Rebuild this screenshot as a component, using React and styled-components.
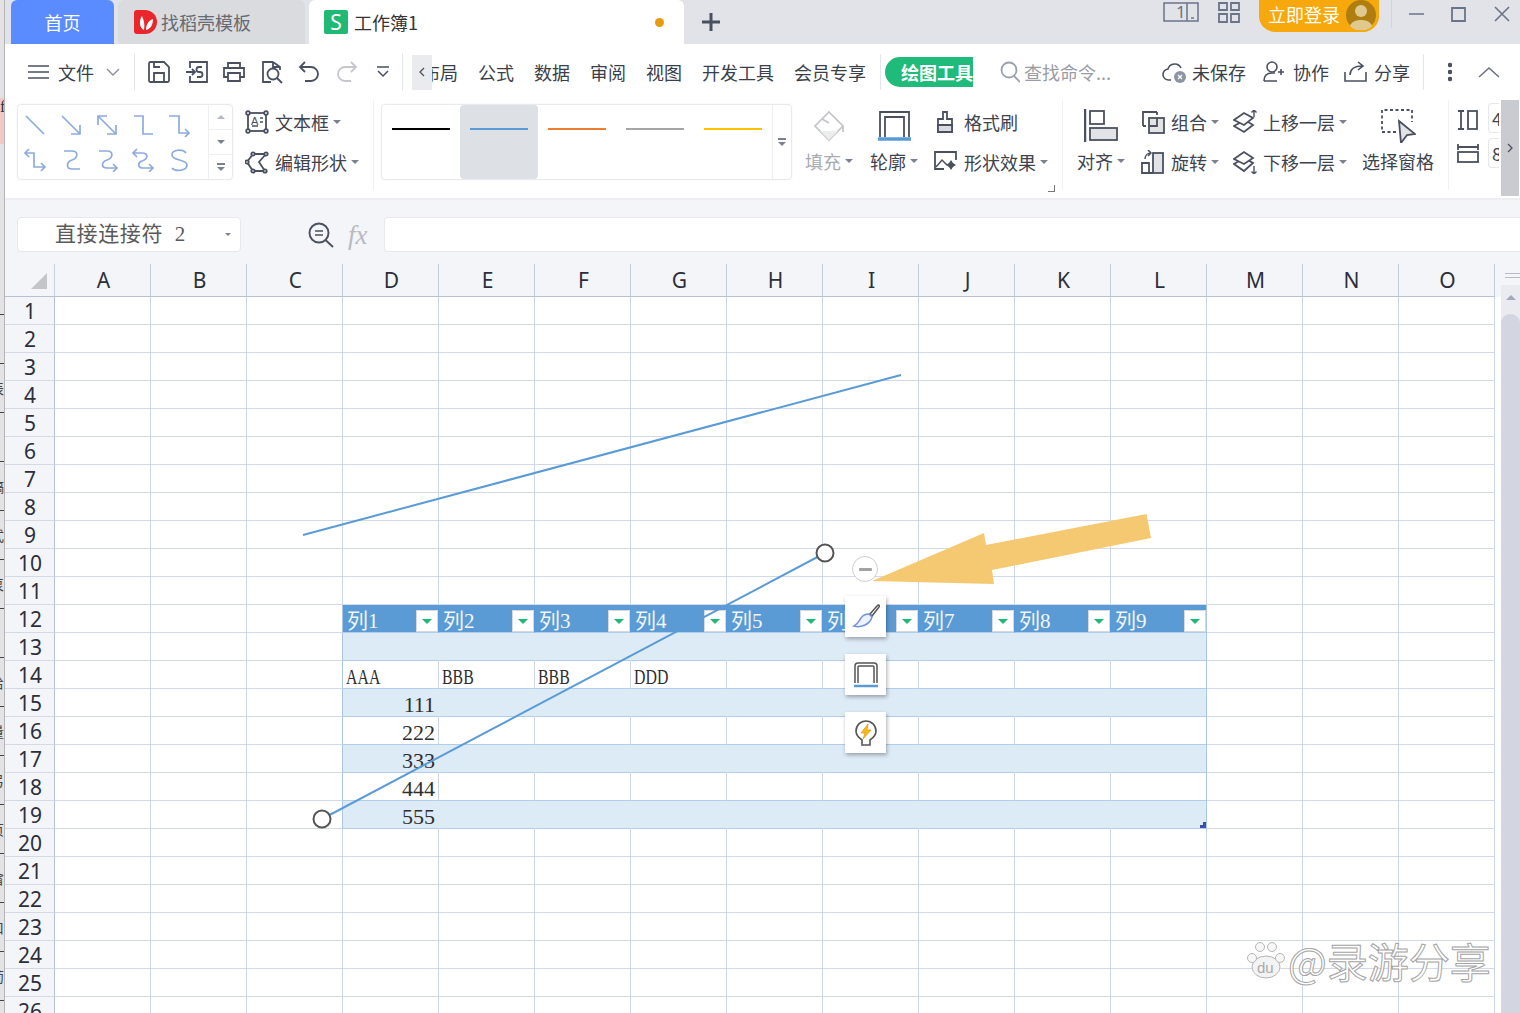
import React from "react";
import styled, { createGlobalStyle } from "styled-components";

const SANS = `"Noto Sans CJK SC", "Noto Sans", sans-serif`;
const SERIF = `"Liberation Serif", "Noto Sans CJK SC", serif`;
const INK = "#4a5060";

const GlobalStyle = createGlobalStyle`
  html, body { margin: 0; padding: 0; background: #fff; }
  body { font-family: ${SANS}; color: #333; }
  * { box-sizing: border-box; }
`;

const Page = styled.div`
  position: relative;
  display: flex;
  width: 1520px;
  height: 1013px;
  overflow: hidden;
`;
const Strip = styled.div`
  width: 5px;
  flex: none;
  display: flex;
  flex-direction: column;
  background: #e3e3e5;
  border-right: 1px solid #b4b4b6;
`;
const StripTop = styled.div`
  height: ${(p) => p.$h}px;
  flex: none;
  background: ${(p) => p.$bg || "transparent"};
  overflow: hidden;
  font: 16px ${SERIF};
  color: #333;
`;
const StripRow = styled.div`
  height: 49px;
  flex: none;
  overflow: hidden;
  border-bottom: 1px solid #444;
  font-size: 14px;
  line-height: 48px;
  color: #444;
  text-indent: -10px;
`;
const Main = styled.div`
  flex: 1;
  min-width: 0;
  display: flex;
  flex-direction: column;
`;

const Glyph = styled.svg`
  flex: none;
  display: block;
  margin-left: ${(p) => p.$ml || 0}px;
  fill: none;
  stroke: ${(p) => p.$color || INK};
  stroke-width: ${(p) => p.$sw || 1.8};
`;
const Icon = ({ w = 24, h = 24, children, ...rest }) => (
  <Glyph width={w} height={h} viewBox={`0 0 ${w} ${h}`} {...rest}>
    {children}
  </Glyph>
);

/* title bar */
const TitleBar = styled.div`
  height: 44px;
  flex: none;
  display: flex;
  align-items: center;
  padding-left: 6px;
  background: #e1e3e8;
`;
const Tab = styled.div`
  height: 44px;
  width: ${(p) => p.$w}px;
  margin-right: 4px;
  flex: none;
  display: flex;
  align-items: center;
  justify-content: ${(p) => (p.$center ? "center" : "flex-start")};
  padding-left: ${(p) => p.$pl || 0}px;
  padding-right: ${(p) => p.$pr || 0}px;
  border-radius: 6px 6px 0 0;
  background: ${(p) => p.$bg};
  color: ${(p) => p.$fg};
  font-size: 18px;
`;
const TabLabel = styled.span`
  margin-left: ${(p) => p.$ml || 5}px;
`;
const SheetLogo = styled.div`
  width: 24px;
  height: 24px;
  flex: none;
  background: #1fb974;
  border-radius: 2px;
  color: #fff;
  font: 400 21px/24px "Noto Sans", sans-serif;
  text-align: center;
`;
const Dot = styled.span`
  width: 9px;
  height: 9px;
  border-radius: 50%;
  background: #e99a0a;
  margin-left: auto;
`;
const WindowTools = styled.div`
  margin-left: auto;
  height: 44px;
  display: flex;
  align-items: flex-start;
  padding-right: 10px;
`;
const LoginPill = styled.div`
  width: 120px;
  height: 32px;
  margin-left: 19px;
  display: flex;
  align-items: center;
  padding: 0 0 4px 9px;
  border-radius: 0 0 16px 16px;
  background: #f6a80c;
  color: #fff;
  font-size: 18px;
`;
const Avatar = styled.svg`
  width: 30px;
  height: 30px;
  margin: 2px 0 0 6px;
  flex: none;
`;
const BarLine = styled.div`
  width: 1px;
  height: 28px;
  margin-left: 12px;
  background: #d2d4d9;
`;

/* menu bar */
const MenuBar = styled.div`
  height: 56px;
  flex: none;
  display: flex;
  align-items: center;
  padding-left: 23px;
  background: #fff;
  font-size: 18px;
  color: #3a3f4a;
`;
const MenuText = styled.span`
  flex: none;
  margin-left: ${(p) => p.$ml || 0}px;
  color: ${(p) => p.$color || "inherit"};
  white-space: nowrap;
`;
const MenuLine = styled.div`
  width: 1px;
  height: 36px;
  flex: none;
  margin-left: ${(p) => p.$ml}px;
  background: #e3e5e9;
`;
const TabScroll = styled.div`
  width: 20px;
  height: 35px;
  flex: none;
  margin-left: 9px;
  display: flex;
  align-items: center;
  justify-content: center;
  background: #e9ebef;
`;
const ClippedTab = styled.div`
  width: 26px;
  flex: none;
  display: flex;
  justify-content: flex-end;
  overflow: hidden;
  white-space: nowrap;
`;
const ToolPill = styled.div`
  width: 88px;
  height: 30px;
  flex: none;
  margin-left: 4px;
  padding-left: 16px;
  overflow: hidden;
  border-radius: 15px 0 0 15px;
  background: #20ba7b;
  color: #fff;
  font-weight: 700;
  line-height: 30px;
  white-space: nowrap;
`;

/* ribbon */
const Ribbon = styled.div`
  position: relative;
  height: 100px;
  flex: none;
  display: flex;
  align-items: flex-start;
  padding-left: 12px;
  overflow: hidden;
  background: #fff;
  border-bottom: 2px solid #eceef1;
  font-size: 18px;
  color: #3e434e;
`;
const ShapeGallery = styled.div`
  width: 216px;
  height: 76px;
  margin-top: 4px;
  flex: none;
  display: flex;
  border: 1px solid #e9eaec;
  border-radius: 4px;
  box-shadow: 0 0 2px #eee;
`;
const ShapeGrid = styled.div`
  flex: 1;
  display: grid;
  grid-template-columns: repeat(5, 36px);
  grid-auto-rows: 35px;
  align-content: center;
  justify-items: center;
  align-items: center;
  margin-left: -1px;
`;
const GalleryScroll = styled.div`
  width: 24px;
  flex: none;
  display: flex;
  flex-direction: column;
  border-left: 1px solid #eeeff1;
`;
const ScrollStep = styled.div`
  flex: 1;
  display: flex;
  align-items: center;
  justify-content: center;
  & + & {
    border-top: 1px solid #eeeff1;
  }
`;
const Tri = styled.span`
  display: block;
  flex: none;
  width: 0;
  height: 0;
  margin-left: ${(p) => p.$ml || 0}px;
  border-left: ${(p) => p.$s || 4}px solid transparent;
  border-right: ${(p) => p.$s || 4}px solid transparent;
  border-top: ${(p) => (p.$up ? "0" : `${p.$s || 4}px solid ${p.$color || "#7b8190"}`)};
  border-bottom: ${(p) => (p.$up ? `${p.$s || 4}px solid ${p.$color || "#b4b8c2"}` : "0")};
`;
const Stack = styled.div`
  width: ${(p) => p.$w}px;
  margin-left: ${(p) => p.$ml}px;
  margin-top: 10px;
  flex: none;
  display: flex;
  flex-direction: column;
  gap: ${(p) => p.$gap ?? 16}px;
`;
const ToolRow = styled.div`
  height: 24px;
  display: flex;
  align-items: center;
  white-space: nowrap;
`;
const ToolText = styled.span`
  margin-left: 6px;
  color: ${(p) => p.$color || "inherit"};
`;
const RibbonLine = styled.div`
  width: 1px;
  height: 90px;
  flex: none;
  margin-left: ${(p) => p.$ml}px;
  background: #f0f1f3;
`;
const LineGallery = styled.div`
  width: 411px;
  height: 76px;
  margin-top: 4px;
  margin-left: 7px;
  flex: none;
  display: flex;
  border: 1px solid #e9eaec;
  border-radius: 4px;
  box-shadow: 0 0 2px #eee;
`;
const LineCell = styled.div`
  width: 78px;
  flex: none;
  padding: 23px 10px 0;
  border-radius: 4px;
  background: ${(p) => (p.$on ? "#dde1e6" : "transparent")};
`;
const LineSample = styled.div`
  height: 2px;
  background: ${(p) => p.$color};
`;
const LineScroll = styled.div`
  margin-left: auto;
  width: 19px;
  display: flex;
  flex-direction: column;
  align-items: center;
  justify-content: center;
  gap: 2px;
  border-left: 1px solid #eeeff1;
`;
const MoreIcon = styled.div`
  display: flex;
  flex-direction: column;
  align-items: center;
  gap: 2px;
`;
const MoreBar = styled.span`
  width: 8px;
  height: 1.5px;
  background: #7b8190;
`;
const BigTool = styled.div`
  width: ${(p) => p.$w}px;
  margin-left: ${(p) => p.$ml}px;
  padding-top: 8px;
  flex: none;
  display: flex;
  flex-direction: column;
  align-items: center;
`;
const BigIconBox = styled.div`
  height: 35px;
  display: flex;
  align-items: center;
  margin-bottom: 6px;
`;
const BigLabel = styled.div`
  display: flex;
  align-items: center;
  line-height: 24px;
  white-space: nowrap;
  color: ${(p) => p.$color || "inherit"};
`;
const CornerMark = styled.span`
  position: absolute;
  left: 1043px;
  top: 85px;
  width: 7px;
  height: 7px;
  border-right: 1px solid #777;
  border-bottom: 1px solid #777;
`;
const SizeStack = styled.div`
  margin-left: 8px;
  margin-top: 10px;
  display: flex;
  flex-direction: column;
  gap: 13px;
  flex: none;
`;
const SizeInputs = styled.div`
  margin-left: 9px;
  margin-top: 3px;
  flex: none;
  display: flex;
  flex-direction: column;
  gap: 5px;
`;
const SizeInput = styled.div`
  width: 11px;
  height: 30px;
  overflow: hidden;
  border: 1px solid #e6e7e9;
  border-right: 0;
  border-radius: 4px 0 0 4px;
  padding-left: 3px;
  font-size: 18px;
  line-height: 28px;
`;
const RibbonEnd = styled.div`
  width: 18px;
  height: 96px;
  margin-left: 2px;
  flex: none;
  display: flex;
  align-items: center;
  justify-content: center;
  background: #c9cbd0;
`;

/* formula bar */
const FormulaBar = styled.div`
  height: 64px;
  flex: none;
  display: flex;
  align-items: center;
  padding: 17px 0 12px 12px;
  background: #f3f5f8;
`;
const NameBox = styled.div`
  width: 224px;
  height: 35px;
  flex: none;
  display: flex;
  align-items: center;
  padding: 0 9px 0 37px;
  background: #fff;
  border: 1px solid #e6e8ec;
  border-radius: 4px;
  font: 21px/33px ${SERIF};
  color: #5a5a5a;
  letter-spacing: 0.6px;
  word-spacing: 6px;
`;
const NameCaret = styled.span`
  margin-left: auto;
`;
const FxMark = styled.span`
  margin-left: 14px;
  width: 25px;
  font: italic 27px/34px ${SERIF};
  color: #b9bbc0;
`;
const FormulaInput = styled.div`
  flex: 1;
  height: 35px;
  margin-left: 11px;
  background: #fff;
  border: 1px solid #e6e8ec;
  border-right: 0;
  border-radius: 4px 0 0 4px;
`;

/* sheet */
const Sheet = styled.div`
  flex: 1;
  min-height: 0;
  display: flex;
  overflow: hidden;
`;
const SheetGrid = styled.div`
  width: 1490px;
  flex: none;
`;
const SheetRow = styled.div`
  display: flex;
  height: ${(p) => (p.$head ? 33 : 28)}px;
`;
const CornerHead = styled.div`
  width: 50px;
  flex: none;
  display: flex;
  align-items: flex-end;
  justify-content: flex-end;
  padding: 0 7px 7px 0;
  background: #f3f5f8;
  border-right: 1px solid #cdd2e0;
  border-bottom: 1px solid #b9c0d4;
`;
const CornerTriangle = styled.span`
  width: 0;
  height: 0;
  border-left: 16px solid transparent;
  border-bottom: 16px solid #c3c5c9;
`;
const ColHead = styled.div`
  width: 96px;
  flex: none;
  padding-left: 2px;
  text-align: center;
  background: #f3f5f8;
  border-right: 1px solid #c6cbdb;
  border-bottom: 1px solid #b9c0d4;
  font: 21px/33px "Noto Sans", sans-serif;
  color: #2c2f3a;
`;
const RowHead = styled.div`
  width: 50px;
  flex: none;
  text-align: center;
  padding-left: 1px;
  background: #f3f5f8;
  border-right: 1px solid #b9c0d4;
  border-bottom: 1px solid #d5d9e6;
  font: 21px/29px "Noto Sans", sans-serif;
  color: #2c2f3a;
`;
const toneBg = { plain: "#fff", white: "#fff", band: "#ddebf7", head: "#5b9bd5" };
const Cell = styled.div`
  position: relative;
  width: 96px;
  flex: none;
  display: flex;
  align-items: center;
  justify-content: ${(p) => (p.$right ? "flex-end" : "flex-start")};
  padding: ${(p) => (p.$right ? "5px 3px 0 0" : "5px 0 0 3px")};
  background: ${(p) => toneBg[p.$tone]};
  border-bottom: 1px solid ${(p) => (p.$tone === "plain" ? "#d3d9ea" : "#b2cdea")};
  border-right: 1px solid
    ${(p) => {
      if (p.$edge) return "#a9c6e6";
      if (p.$tone === "plain" || p.$tone === "white") return "#cdd5ea";
      return toneBg[p.$tone];
    }};
  font: 22px/22px ${SERIF};
  color: ${(p) => (p.$tone === "head" ? "#f2f6fb" : "#2e2e2e")};
`;
const HeadLabel = styled.span`
  margin-left: 1px;
  font-size: 21px;
`;
const NarrowText = styled.span`
  display: inline-block;
  transform: scaleX(0.72);
  transform-origin: left center;
  white-space: nowrap;
`;
const FilterButton = styled.span`
  position: absolute;
  right: 0;
  top: 5px;
  width: 22px;
  height: 22px;
  display: flex;
  align-items: center;
  justify-content: center;
  background: #fff;
  border: 1px solid #d8d8d8;
`;
const ResizeMark = styled.span`
  position: absolute;
  right: 0;
  bottom: 0;
  width: 6px;
  height: 6px;
  background: #3a4fae;
  clip-path: polygon(100% 0, 100% 100%, 0 100%, 0 50%, 50% 50%, 50% 0);
`;
const Rail = styled.div`
  flex: 1;
  display: flex;
  background: #fff;
`;
const RailGutter = styled.div`
  width: 6px;
  flex: none;
  height: 33px;
  background: #f3f5f8;
`;
const RailBody = styled.div`
  flex: 1;
  display: flex;
  flex-direction: column;
  align-items: stretch;
`;
const SplitBox = styled.div`
  height: 21px;
  flex: none;
  padding: 9px 0 0 4px;
  background: #f3f5f8;
`;
const SplitBar = styled.div`
  height: 5px;
  border-top: 1px solid #b9bcc4;
  border-bottom: 1px solid #b9bcc4;
`;
const Track = styled.div`
  flex: 1;
  display: flex;
  flex-direction: column;
  align-items: center;
  padding-top: 10px;
  background: #e9ebf0;
`;
const Thumb = styled.div`
  width: 100%;
  flex: 1;
  margin-top: 14px;
  border-radius: 9px 9px 0 0;
  background: #d3d6e1;
`;

/* things lying on top of the sheet */
const ShapeLayer = styled.svg`
  position: absolute;
  left: 0;
  top: 0;
  pointer-events: none;
`;
const FloatBar = styled.div`
  position: absolute;
  left: 845px;
  top: 596px;
  display: flex;
  flex-direction: column;
  gap: 17px;
`;
const FloatButton = styled.div`
  width: 41px;
  height: 41px;
  display: flex;
  align-items: center;
  justify-content: center;
  background: #fff;
  box-shadow: 1px 2px 4px rgba(0, 0, 0, 0.32);
`;
const CollapseButton = styled.div`
  position: absolute;
  left: 852px;
  top: 556px;
  width: 26px;
  height: 26px;
  display: flex;
  align-items: center;
  justify-content: center;
  background: #fff;
  border: 1.5px solid #cfcfcf;
  border-radius: 50%;
  &::before {
    content: "";
    width: 13px;
    height: 3px;
    border-radius: 1px;
    background: #a2a2a2;
  }
`;
const Watermark = styled.div`
  position: absolute;
  left: 1247px;
  top: 934px;
  display: flex;
  align-items: center;
  gap: 3px;
  pointer-events: none;
`;
const WatermarkText = styled.span`
  font: 41px/52px ${SANS};
  color: #fff;
  -webkit-text-stroke: 1px #a4a4a4;
  white-space: nowrap;
`;

const COLS = "ABCDEFGHIJKLMNO".split("");
const STRIP = ["", "", "表", "", "稿", "式", "泵", "", "给", "量", "弓", "页", "畲", "口", "葡"];
const SHAPES = [
  "M3 3L21 21",
  "M3 3L21 21M21 12V21H12",
  "M3 3L21 21M3 12V3H12M21 12V21H12",
  "M3 3H12V21H22",
  "M2 3H12V20H22M18 16L22 20L18 24",
  "M2 5H11V19H22M6 1L2 5L6 9M18 15L22 19L18 23",
  "M5 3H13C20 3 19 10 13 12C7 14 7 21 13 21H21",
  "M4 3H12C19 3 18 10 12 12C6 14 6 20 12 20H22M18 16L22 20L18 24",
  "M2 5H11C18 5 17 11 11 13C6 15 7 20 12 20H22M6 1L2 5L6 9M18 16L22 20L18 24",
  "M19 5C16 1 5 1 5 7C5 13 20 11 20 17C20 23 8 24 5 20",
];
const LINES = ["#000", "#5b9bd5", "#ed7d31", "#a5a5a5", "#ffc000"];

const Caret = ({ ml = 4 }) => <Tri $s={4} $ml={ml} $color="#7b8190" />;

const IcTextBox = () => (
  <Icon>
    <rect x="3" y="3" width="18" height="18" />
    <circle cx="3" cy="3" r="1.8" fill="#fff" />
    <circle cx="21" cy="3" r="1.8" fill="#fff" />
    <circle cx="3" cy="21" r="1.8" fill="#fff" />
    <circle cx="21" cy="21" r="1.8" fill="#fff" />
    <path d="M7 16H13M15 8H18M15 12H18" strokeWidth="1.4" />
    <text x="6" y="14.5" fontSize="11" fontFamily="Liberation Sans" stroke="none" fill={INK}>A</text>
  </Icon>
);
const IcEditShape = () => (
  <Icon>
    <path d="M2 12L8 4H21L14 12L20 21H8Z" />
    <circle cx="2" cy="12" r="1.7" fill="#fff" />
    <circle cx="8" cy="4" r="1.7" fill="#fff" />
    <circle cx="21" cy="4" r="1.7" fill="#fff" />
    <circle cx="20" cy="21" r="1.7" fill="#fff" />
    <circle cx="8" cy="21" r="1.7" fill="#fff" />
  </Icon>
);
const IcPainter = () => (
  <Icon>
    <path d="M9 2H13V9H18V22H4V9H9Z" />
    <path d="M4 15H18V22H4Z" fill="#d9dbe0" />
  </Icon>
);
const IcEffect = () => (
  <Icon>
    <path d="M10 19H1V2H22V10" />
    <path d="M2 17L8 10L13 15" strokeWidth="1.5" />
    <path d="M17 10L19 13L22 15L19 17L17 20L15 17L12 15L15 13Z" fill={INK} stroke="none" />
  </Icon>
);
const IcGroup = () => (
  <Icon>
    <path d="M2 16V2H16" />
    <path d="M16 2V5M2 16H5" />
    <rect x="8" y="8" width="15" height="15" fill="#e1e3e7" />
    <path d="M8 16H16V8" />
  </Icon>
);
const IcRotate = () => (
  <Icon>
    <rect x="12" y="3" width="10" height="20" fill="#e1e3e7" />
    <path d="M1 23V13H8V23ZM1 23H12" />
    <path d="M4 9C4 5 7 3 10 3M7 0L10 3L7 6" strokeWidth="1.5" />
  </Icon>
);
const IcLayerUp = () => (
  <Icon>
    <path d="M1 16L12 10L20 15L11 22Z" />
    <path d="M1 10L11 3L20 8L11 15Z" fill="#fff" />
    <path d="M21 7V0M18.500 2.500L21 0L23.500 2.500" strokeWidth="1.4" />
  </Icon>
);
const IcLayerDown = () => (
  <Icon>
    <path d="M1 14L11 8L20 13L11 21Z" />
    <path d="M1 9L11 2L20 8L11 14Z" fill="#fff" />
    <path d="M21 16V24M18.500 21.500L21 24L23.500 21.500" strokeWidth="1.4" />
  </Icon>
);

export default function App() {
  return (
    <Page>
      <GlobalStyle />
      <Strip>
        <StripTop $h={98} />
        <StripTop $h={46} $bg="#f0c9c6">f</StripTop>
        <StripTop $h={122} />
        {STRIP.map((ch, i) => (
          <StripRow key={i}>{ch}</StripRow>
        ))}
      </Strip>

      <Main>
        <TitleBar>
          <Tab $w={103} $center $bg="#5b8cff" $fg="#fff">首页</Tab>
          <Tab $w={187} $pl={16} $bg="#d9dbdf" $fg="#666a72">
            <Icon w={23} h={24} $color="none">
              <path d="M3 0H11A12 12 0 0 1 11 24H3A3 3 0 0 1 0 21V3A3 3 0 0 1 3 0Z" fill="#e8262c" />
              <path d="M10 20C5 18 5 10 8 6C10 10 11 15 10 20ZM12 20C12 15 14 11 19 9C19 14 17 19 12 20Z" fill="#fff" />
            </Icon>
            <TabLabel $ml={4}>找稻壳模板</TabLabel>
          </Tab>
          <Tab $w={375} $pl={15} $pr={20} $bg="#fff" $fg="#333">
            <SheetLogo>S</SheetLogo>
            <TabLabel $ml={6}>工作簿1</TabLabel>
            <Dot />
          </Tab>
          <Icon w={20} h={20} $ml={13} $sw={3}>
            <path d="M10 1V19M1 10H19" />
          </Icon>
          <WindowTools>
            <Icon w={36} h={24} $sw={1.5} $color="#6a7488">
              <path d="M24 21H1V3H35V21H24V3" />
              <path d="M28 18H31" />
              <text x="13" y="18" fontSize="17" fontFamily="Noto Sans" stroke="none" fill="#6a7488">1</text>
            </Icon>
            <Icon w={22} h={24} $ml={19} $sw={1.8} $color="#6a7488">
              <path d="M1 3H9V10H1ZM13 3H21V10H13ZM1 14H9V22H1ZM13 14H21V22H13Z" />
            </Icon>
            <LoginPill>
              立即登录
              <Avatar viewBox="0 0 30 30">
                <circle cx="15" cy="15" r="15" fill="#b07d10" />
                <circle cx="15" cy="11" r="6" fill="#e0c98e" />
                <path d="M4 26C6 18 24 18 26 26A15 15 0 0 1 4 26Z" fill="#e0c98e" />
              </Avatar>
            </LoginPill>
            <BarLine />
            <Icon w={15} h={30} $ml={17} $sw={1.5} $color="#6a7488">
              <path d="M0 14H15" />
            </Icon>
            <Icon w={15} h={30} $ml={27} $sw={1.8} $color="#6a7488">
              <path d="M1 8H14V21H1Z" />
            </Icon>
            <Icon w={16} h={30} $ml={28} $sw={1.6} $color="#6a7488">
              <path d="M1 7L15 21M15 7L1 21" />
            </Icon>
          </WindowTools>
        </TitleBar>

        <MenuBar>
          <Icon w={21} h={16} $sw={1.6}>
            <path d="M0 2H21M0 8H21M0 14H21" />
          </Icon>
          <MenuText $ml={9}>文件</MenuText>
          <Icon w={14} h={10} $ml={12} $sw={1.4} $color="#8a8f9a">
            <path d="M1 2L7 8L13 2" />
          </Icon>
          <MenuLine $ml={14} />
          <Icon $ml={12}>
            <path d="M2 3.500A1.500 1.500 0 0 1 3.500 2H17L22 7V20.500A1.500 1.500 0 0 1 20.500 22H3.500A1.500 1.500 0 0 1 2 20.500ZM7 22V13H17V22M7 2V7H13" />
          </Icon>
          <Icon $ml={14}>
            <path d="M5 8V2H22V22H5V16M1 12H10M7 9L10 12L7 15M12 17H15A2.500 2.500 0 0 0 15 12H14A2.500 2.500 0 0 1 14 7H17" />
          </Icon>
          <Icon $ml={13}>
            <path d="M6 8V3H18V8M6 17H2V8H22V17H18M6 13H18V21H6Z" />
          </Icon>
          <Icon $ml={14}>
            <path d="M13 2H3V22H11M13 2L20 7V10M13 2V7H20M17 18L22 23" />
            <circle cx="13" cy="14" r="5.500" />
          </Icon>
          <Icon w={22} $ml={14}>
            <path d="M2 7H13A7 7 0 0 1 13 21H7M7 2L2 7L7 12" />
          </Icon>
          <Icon w={22} $ml={16} $color="#c5c7cc">
            <path d="M20 7H9A7 7 0 0 0 9 21H15M15 2L20 7L15 12" />
          </Icon>
          <Icon w={14} h={14} $ml={18} $sw={1.5}>
            <path d="M1 2H13M2 6L7 11L12 6" />
          </Icon>
          <MenuLine $ml={12} />
          <TabScroll>
            <Icon w={6} h={10} $sw={1.3}>
              <path d="M5 1L1 5L5 9" />
            </Icon>
          </TabScroll>
          <ClippedTab>布局</ClippedTab>
          <MenuText $ml={20}>公式</MenuText>
          <MenuText $ml={20}>数据</MenuText>
          <MenuText $ml={20}>审阅</MenuText>
          <MenuText $ml={20}>视图</MenuText>
          <MenuText $ml={20}>开发工具</MenuText>
          <MenuText $ml={20}>会员专享</MenuText>
          <MenuLine $ml={14} />
          <ToolPill>绘图工具</ToolPill>
          <Icon w={20} h={22} $ml={27} $color="#9aa0ae">
            <circle cx="9" cy="9" r="7.500" />
            <path d="M14 15L20 21" />
          </Icon>
          <MenuText $ml={4} $color="#9a9da5">查找命令...</MenuText>
          <Icon w={26} h={24} $ml={51} $sw={1.6}>
            <path d="M9 20H7A5.500 5.500 0 0 1 6 9A7 7 0 0 1 19 8" />
            <circle cx="18" cy="17" r="6" fill="#8d95a5" stroke="none" />
            <path d="M16 15L20 19M20 15L16 19" stroke="#fff" strokeWidth="1.2" />
          </Icon>
          <MenuText $ml={4}>未保存</MenuText>
          <Icon w={23} h={24} $ml={17} $sw={1.6}>
            <circle cx="9" cy="7" r="5" />
            <path d="M1 21C1 15 5 13 9 13H12M1 21H14M18 9V15M15 12H21" />
          </Icon>
          <MenuText $ml={7}>协作</MenuText>
          <Icon w={23} h={24} $ml={15} $sw={1.6}>
            <path d="M1 12V21H22V12M6 15C6 9 11 6 18 6M14 2L19 6L14 10" />
          </Icon>
          <MenuText $ml={7}>分享</MenuText>
          <MenuLine $ml={13} />
          <Icon w={4} h={20} $ml={24} $sw={0}>
            <circle cx="2" cy="3" r="1.400" fill="#666c7a" />
            <circle cx="2" cy="10" r="1.400" fill="#666c7a" />
            <circle cx="2" cy="17" r="1.400" fill="#666c7a" />
          </Icon>
          <Icon w={22} h={12} $ml={26} $sw={1.5} $color="#6a7080">
            <path d="M1 11L11 2L21 11" />
          </Icon>
        </MenuBar>

        <Ribbon>
          <ShapeGallery>
            <ShapeGrid>
              {SHAPES.map((d) => (
                <Icon key={d} $color="#8dabe0" $sw={1.7}>
                  <path d={d} />
                </Icon>
              ))}
            </ShapeGrid>
            <GalleryScroll>
              <ScrollStep><Tri $up /></ScrollStep>
              <ScrollStep><Tri /></ScrollStep>
              <ScrollStep>
                <MoreIcon>
                  <MoreBar />
                  <Tri />
                </MoreIcon>
              </ScrollStep>
            </GalleryScroll>
          </ShapeGallery>

          <Stack $w={116} $ml={12}>
            <ToolRow>
              <IcTextBox />
              <ToolText>文本框</ToolText>
              <Caret />
            </ToolRow>
            <ToolRow>
              <IcEditShape />
              <ToolText>编辑形状</ToolText>
              <Caret />
            </ToolRow>
          </Stack>
          <RibbonLine $ml={12} />

          <LineGallery>
            {LINES.map((c, i) => (
              <LineCell key={c} $on={i === 1}>
                <LineSample $color={c} />
              </LineCell>
            ))}
            <LineScroll>
              <MoreBar />
              <Tri />
            </LineScroll>
          </LineGallery>

          <BigTool $w={48} $ml={13}>
            <BigIconBox>
              <Icon w={32} h={32} $color="#c2c4c8" $sw={1.7}>
                <path d="M16 2L30 16L16 30L2 16Z" />
                <path d="M9 9L16 13M30 16V22" />
                <path d="M7 21H25L16 30Z" fill="#eceded" stroke="none" />
              </Icon>
            </BigIconBox>
            <BigLabel $color="#a8abb0">填充<Caret /></BigLabel>
          </BigTool>
          <BigTool $w={48} $ml={17}>
            <BigIconBox>
              <Icon w={33} h={33}>
                <path d="M2 28V3H31V28M7 28V8H26V28" />
                <path d="M0 30H33" stroke="#5b9bd5" strokeWidth="3.500" />
              </Icon>
            </BigIconBox>
            <BigLabel>轮廓<Caret /></BigLabel>
          </BigTool>
          <Stack $w={116} $ml={16}>
            <ToolRow>
              <IcPainter />
              <ToolText>格式刷</ToolText>
            </ToolRow>
            <ToolRow>
              <IcEffect />
              <ToolText>形状效果</ToolText>
              <Caret />
            </ToolRow>
          </Stack>
          <CornerMark />
          <RibbonLine $ml={12} />

          <BigTool $w={48} $ml={14}>
            <BigIconBox>
              <Icon w={34} h={33}>
                <path d="M1 0V33" strokeWidth="2.500" />
                <rect x="6" y="2" width="14" height="13" />
                <rect x="6" y="19" width="27" height="12" fill="#e1e3e7" />
              </Icon>
            </BigIconBox>
            <BigLabel>对齐<Caret /></BigLabel>
          </BigTool>
          <Stack $w={80} $ml={16}>
            <ToolRow>
              <IcGroup />
              <ToolText>组合</ToolText>
              <Caret />
            </ToolRow>
            <ToolRow>
              <IcRotate />
              <ToolText>旋转</ToolText>
              <Caret />
            </ToolRow>
          </Stack>
          <Stack $w={116} $ml={12}>
            <ToolRow>
              <IcLayerUp />
              <ToolText>上移一层</ToolText>
              <Caret />
            </ToolRow>
            <ToolRow>
              <IcLayerDown />
              <ToolText>下移一层</ToolText>
              <Caret />
            </ToolRow>
          </Stack>
          <BigTool $w={74} $ml={12}>
            <BigIconBox>
              <Icon w={36} h={35}>
                <path d="M16 24H2V2H32V14" strokeDasharray="3 2.500" />
                <path d="M19 13L35 26L27 27L21 35Z" fill="#e1e3e7" />
              </Icon>
            </BigIconBox>
            <BigLabel>选择窗格</BigLabel>
          </BigTool>
          <RibbonLine $ml={13} />
          <SizeStack>
            <Icon w={22} h={20}>
              <path d="M1 1H7M1 19H7M4 1V19" />
              <rect x="11" y="1" width="9" height="18" />
            </Icon>
            <Icon w={22} h={20}>
              <path d="M1 1V7M21 1V7M1 4H21" />
              <rect x="1" y="9" width="20" height="10" />
            </Icon>
          </SizeStack>
          <SizeInputs>
            <SizeInput>4</SizeInput>
            <SizeInput>8</SizeInput>
          </SizeInputs>
          <RibbonEnd>
            <Icon w={6} h={10} $sw={1.3}>
              <path d="M1 1L5 5L1 9" />
            </Icon>
          </RibbonEnd>
        </Ribbon>

        <FormulaBar>
          <NameBox>
            直接连接符 2
            <NameCaret><Tri $s={3.5} /></NameCaret>
          </NameBox>
          <Icon w={26} h={26} $ml={67} $sw={1.9}>
            <circle cx="11" cy="11" r="9.500" />
            <path d="M17.500 18L25 25" />
            <path d="M7 9H15M7 13H15" strokeWidth="1.500" />
          </Icon>
          <FxMark>fx</FxMark>
          <FormulaInput />
        </FormulaBar>

        <Sheet>
          <SheetGrid>
            <SheetRow $head>
              <CornerHead><CornerTriangle /></CornerHead>
              {COLS.map((c) => (
                <ColHead key={c}>{c}</ColHead>
              ))}
            </SheetRow>
            {Array.from({ length: 26 }, (_, r) => r + 1).map((row) => (
              <SheetRow key={row}>
                <RowHead>{row}</RowHead>
                {COLS.map((c, i) => (
                  <SheetCell key={c} row={row} col={i} />
                ))}
              </SheetRow>
            ))}
          </SheetGrid>
          <Rail>
            <RailGutter />
            <RailBody>
              <SplitBox><SplitBar /></SplitBox>
              <Track>
                <Tri $up $s={5} $color="#a3a9ba" />
                <Thumb />
              </Track>
            </RailBody>
          </Rail>
        </Sheet>
      </Main>

      <ShapeLayer width="1520" height="1013" viewBox="0 0 1520 1013">
        <path d="M303 535L901 375" stroke="#5b9bd5" strokeWidth="2" fill="none" />
        <path d="M322 819L825 553" stroke="#5b9bd5" strokeWidth="2" fill="none" />
        <circle cx="825" cy="553" r="8.500" fill="#fff" stroke="#555" strokeWidth="2" />
        <circle cx="322" cy="819" r="8.500" fill="#fff" stroke="#555" strokeWidth="2" />
      </ShapeLayer>
      <CollapseButton />
      <ShapeLayer width="1520" height="1013" viewBox="0 0 1520 1013">
        <path d="M1146.500 514L1151 538L992 570L994 584L872 581L984 533L986 545Z" fill="#f5c971" />
      </ShapeLayer>
      <FloatBar>
        <FloatButton>
          <Icon w={28} h={28} $color="#555" $sw={1.5}>
            <path d="M18 11L25 3C27 1 28 3 27 4L20 13Z" fill="#fff" />
            <path d="M17 11L20 14C18 22 8 25 2 23C6 21 7 18 9 15C11 12 14 11 17 11Z" fill="#eef2fc" stroke="#7394dd" />
          </Icon>
        </FloatButton>
        <FloatButton>
          <Icon w={26} h={26} $color="#555" $sw={1.5}>
            <path d="M2 21V4Q2 1 5 1H21Q24 1 24 4V21M5 21V5Q5 4 6 4H20Q21 4 21 5V21" />
            <path d="M1 24H25" stroke="#5b9bd5" strokeWidth="2.500" />
          </Icon>
        </FloatButton>
        <FloatButton>
          <Icon w={24} h={28} $color="#555" $sw={1.6}>
            <path d="M8 21C5 19 2 16 2 12A10 10 0 0 1 22 12C22 16 19 19 16 21V26H8Z" fill="#fff" />
            <path d="M14 5L7 14H11L9 20L17 11H13Z" fill="#f7b81f" stroke="#e59a13" strokeWidth="0.800" />
          </Icon>
        </FloatButton>
      </FloatBar>

      <Watermark>
        <Icon w={38} h={40} $color="#b6b6b6" $sw={1}>
          <ellipse cx="19" cy="27" rx="14" ry="11" fill="#f3f3f3" />
          <circle cx="5" cy="18" r="4.500" fill="#f7f7f7" />
          <circle cx="13" cy="7" r="4.500" fill="#f7f7f7" />
          <circle cx="25" cy="7" r="4.500" fill="#f7f7f7" />
          <circle cx="33" cy="18" r="4.500" fill="#f7f7f7" />
          <text x="10" y="33" fontSize="15" fontFamily="Liberation Sans" stroke="none" fill="#aaa">du</text>
        </Icon>
        <WatermarkText>@录游分享</WatermarkText>
      </Watermark>
    </Page>
  );
}

function SheetCell({ row, col }) {
  const inTable = row >= 12 && row <= 19 && col >= 3 && col <= 11;
  const letters = { 3: "AAA", 4: "BBB", 5: "BBB", 6: "DDD" };
  const numbers = { 15: "111", 16: "222", 17: "333", 18: "444", 19: "555" };
  if (!inTable) {
    const before = col === 2 && row >= 12 && row <= 19;
    return <Cell $tone="plain" $edge={before} />;
  }
  const edge = col === 11;
  if (row === 12) {
    return (
      <Cell $tone="head" $edge={edge}>
        <HeadLabel>列{col - 2}</HeadLabel>
        <FilterButton><Tri $s={5.5} $color="#1fb974" /></FilterButton>
      </Cell>
    );
  }
  const tone = row % 2 === 1 ? "band" : "white";
  if (row === 14 && letters[col]) {
    return (
      <Cell $tone={tone} $edge={edge}>
        <NarrowText>{letters[col]}</NarrowText>
      </Cell>
    );
  }
  if (numbers[row] && col === 3) {
    return <Cell $tone={tone} $right>{numbers[row]}</Cell>;
  }
  return (
    <Cell $tone={tone} $edge={edge}>
      {row === 19 && edge && <ResizeMark />}
    </Cell>
  );
}
